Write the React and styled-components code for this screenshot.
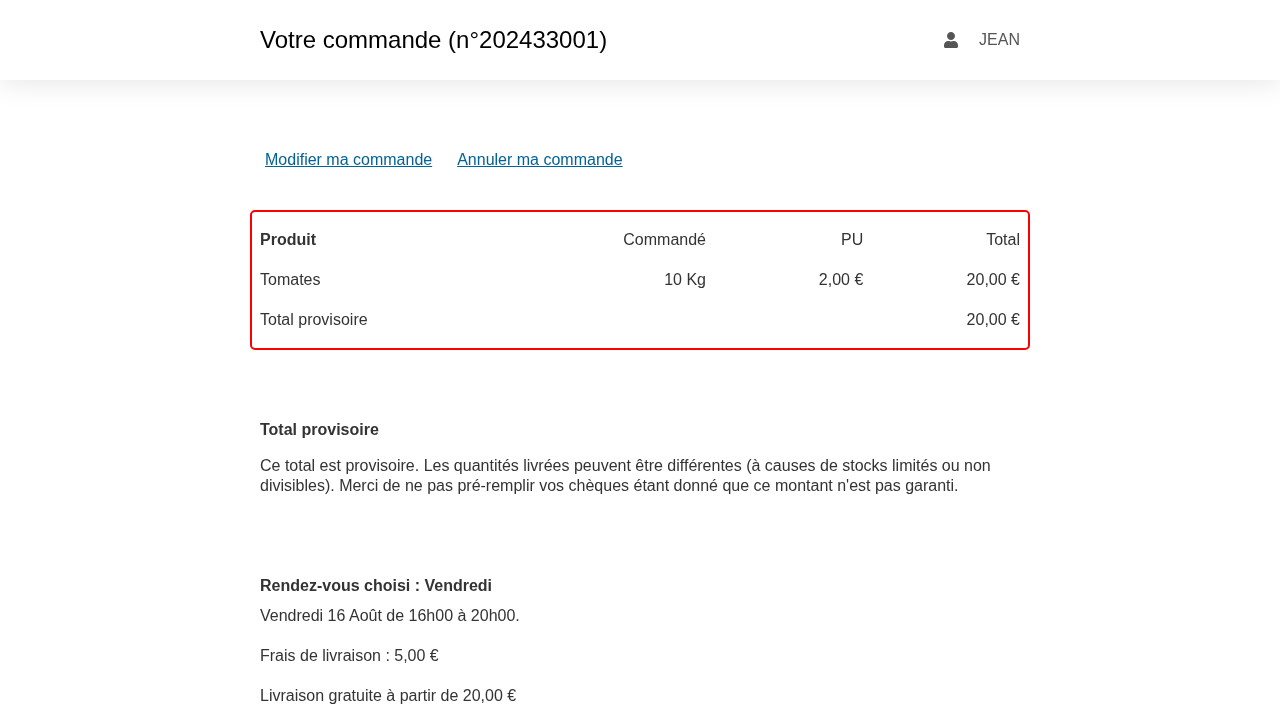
import React from 'react';
import styled, { createGlobalStyle } from 'styled-components';
import { FaUser } from 'react-icons/fa';

const GlobalStyle = createGlobalStyle`
  html, body {
    margin: 0;
    padding: 0;
    background: #fff;
  }
  body {
    font-family: "Liberation Sans", Arial, sans-serif;
    font-size: 16px;
    line-height: 20px;
    color: #333;
  }
  #root {
    will-change: transform;
  }
`;

const Header = styled.header`
  height: 80px;
  background: #fff;
  box-shadow: 0 0 30px rgba(0, 0, 0, 0.12);
`;

const HeaderInner = styled.div`
  width: 760px;
  height: 100%;
  margin: 0 auto;
  display: flex;
  align-items: center;
  justify-content: space-between;
`;

const Title = styled.h1`
  margin: 0;
  font-size: 24px;
  font-weight: 400;
  line-height: 30px;
  color: #000;
`;

const UserMenu = styled.div`
  display: flex;
  align-items: center;
  gap: 21px;
  color: #555;

  svg {
    display: block;
    width: 14px;
    height: 16px;
  }
`;

const Main = styled.main`
  width: 760px;
  margin: 0 auto;
`;

const Actions = styled.nav`
  display: flex;
  gap: 25px;
  padding: 70px 5px 0;
`;

const ActionLink = styled.a`
  color: #006298;
  text-decoration: underline;
`;

const OrderBox = styled.div`
  margin: 40px -10px 0;
  padding: 8px;
  border: 2px solid #f00;
  border-radius: 5px;
`;

const OrderRow = styled.div`
  display: grid;
  grid-template-columns: 289px 157px 157.3px 156.7px;
  align-items: center;
  height: 40px;
`;

const Cell = styled.div`
  text-align: ${(p) => (p.$right ? 'right' : 'left')};
  font-weight: ${(p) => (p.$bold ? 700 : 400)};
`;

const Section = styled.section`
  margin-top: ${(p) => p.$top}px;
`;

const SectionTitle = styled.h2`
  margin: 0;
  font-size: 16px;
  line-height: 20px;
  font-weight: 700;
`;

const Text = styled.p`
  margin: 0;
`;

const Notice = styled(Text)`
  margin-top: 16px;
`;

const Details = styled.div`
  display: flex;
  flex-direction: column;
  gap: 20px;
  margin-top: 10px;
`;

const rows = [
  { name: 'Produit', ordered: 'Commandé', unit: 'PU', total: 'Total', bold: true },
  { name: 'Tomates', ordered: '10 Kg', unit: '2,00 €', total: '20,00 €' },
  { name: 'Total provisoire', ordered: '', unit: '', total: '20,00 €' },
];

const App = () => (
  <>
    <GlobalStyle />
    <Header>
      <HeaderInner>
        <Title>Votre commande (n°202433001)</Title>
        <UserMenu>
          <FaUser />
          <span>JEAN</span>
        </UserMenu>
      </HeaderInner>
    </Header>
    <Main>
      <Actions>
        <ActionLink href="#">Modifier ma commande</ActionLink>
        <ActionLink href="#">Annuler ma commande</ActionLink>
      </Actions>
      <OrderBox>
        {rows.map((row) => (
          <OrderRow key={row.name}>
            <Cell $bold={row.bold}>{row.name}</Cell>
            <Cell $right>{row.ordered}</Cell>
            <Cell $right>{row.unit}</Cell>
            <Cell $right>{row.total}</Cell>
          </OrderRow>
        ))}
      </OrderBox>
      <Section $top={70}>
        <SectionTitle>Total provisoire</SectionTitle>
        <Notice>
          Ce total est provisoire. Les quantités livrées peuvent être différentes (à causes de stocks
          limités ou non divisibles). Merci de ne pas pré-remplir vos chèques étant donné que ce montant
          n'est pas garanti.
        </Notice>
      </Section>
      <Section $top={80}>
        <SectionTitle>Rendez-vous choisi : Vendredi</SectionTitle>
        <Details>
          <Text>Vendredi 16 Août de 16h00 à 20h00.</Text>
          <Text>Frais de livraison : 5,00 €</Text>
          <Text>Livraison gratuite à partir de 20,00 €</Text>
        </Details>
      </Section>
    </Main>
  </>
);

export default App;
